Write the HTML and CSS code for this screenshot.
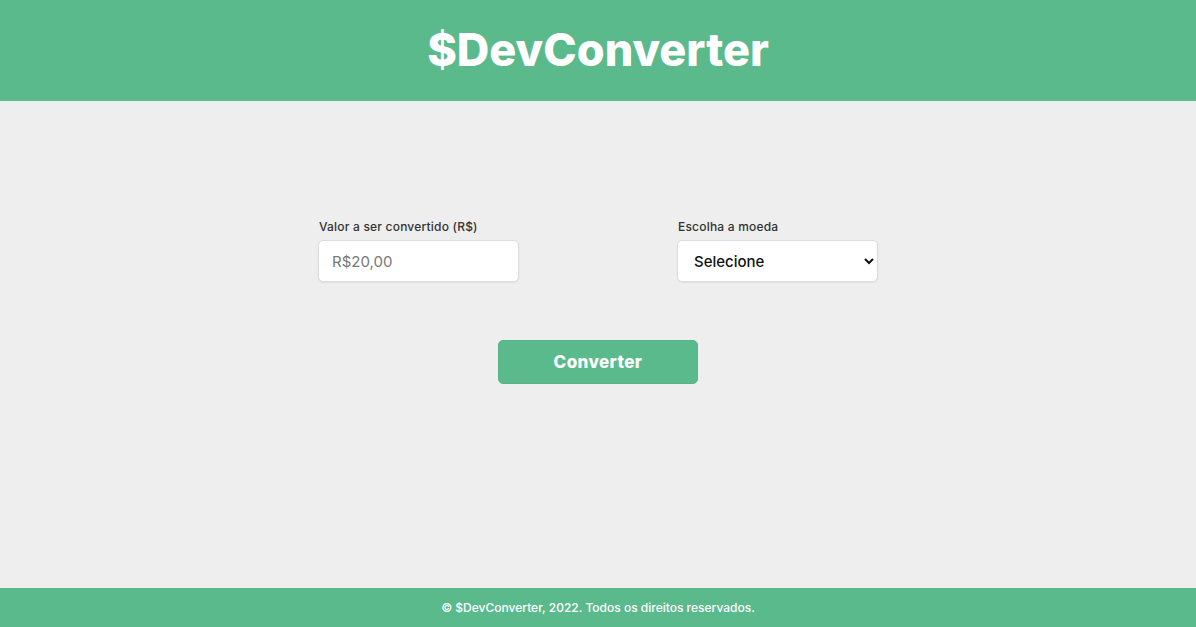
FILE: index.html
```html
<!DOCTYPE html>
<html lang="pt-BR">
<head>
<meta charset="utf-8">
<title>$DevConverter</title>
<link rel="stylesheet" href="styles.css">
</head>
<body>
<header class="header">
  <h1 class="logo">$DevConverter</h1>
</header>
<main class="main">
  <form class="form">
    <div class="fields">
      <div class="field">
        <label class="label" for="valor">Valor a ser convertido (R$)</label>
        <input class="input" id="valor" type="text" placeholder="R$20,00">
      </div>
      <div class="field">
        <label class="label" for="moeda">Escolha a moeda</label>
        <select class="select" id="moeda">
          <option>Selecione</option>
          <option>Dólar</option>
          <option>Euro</option>
        </select>
      </div>
    </div>
    <button class="button" type="button">Converter</button>
  </form>
</main>
<footer class="footer">
  <p class="copy">© $DevConverter, 2022. Todos os direitos reservados.</p>
</footer>
</body>
</html>
```

FILE: styles.css
```css
* { box-sizing: border-box; margin: 0; padding: 0; }
html, body { height: 100%; }
body {
  font-family: "Inter", "Open Sans", sans-serif;
  background: #eeeeee;
  display: flex;
  flex-direction: column;
  min-height: 100vh;
}
.header {
  background: #5bba8c;
  height: 101px;
  display: flex;
  align-items: center;
  justify-content: center;
}
.logo {
  color: #ffffff;
  font-size: 45px;
  font-weight: 800;
  letter-spacing: 0;
  margin-top: -2px;
}
.main {
  flex: 1;
  display: flex;
  justify-content: center;
  padding-top: 117px;
}
.form {
  display: flex;
  flex-direction: column;
  align-items: center;
}
.fields {
  display: flex;
  gap: 158px;
}
.field {
  display: flex;
  flex-direction: column;
  gap: 4px;
}
.label {
  font-size: 12px;
  line-height: 18px;
  font-weight: 500;
  letter-spacing: 0.2px;
  color: #333333;
  padding-left: 1px;
}
.input, .select {
  width: 201px;
  height: 42px;
  background: #ffffff;
  border: 1px solid #dcdcdc;
  border-radius: 5px;
  box-shadow: 0 1px 2px rgba(0, 0, 0, 0.06);
  font-family: inherit;
  font-size: 15px;
  outline: none;
}
.input {
  padding: 0 13px;
  color: #333;
}
.input::placeholder { color: #777777; }
.select {
  padding: 0 12px;
  color: #111111;
  font-weight: 500;
}
.button {
  margin-top: 58px;
  width: 200px;
  height: 44px;
  background: #5bba8c;
  color: #ffffff;
  border: 1px solid #58b387;
  border-radius: 5px;
  font-family: inherit;
  font-size: 17px;
  font-weight: 800;
  letter-spacing: 0.4px;
  cursor: pointer;
}
.footer {
  background: #5bba8c;
  height: 39px;
  display: flex;
  align-items: center;
  justify-content: center;
}
.copy {
  color: #ffffff;
  font-size: 12px;
  font-weight: 500;
}
```
